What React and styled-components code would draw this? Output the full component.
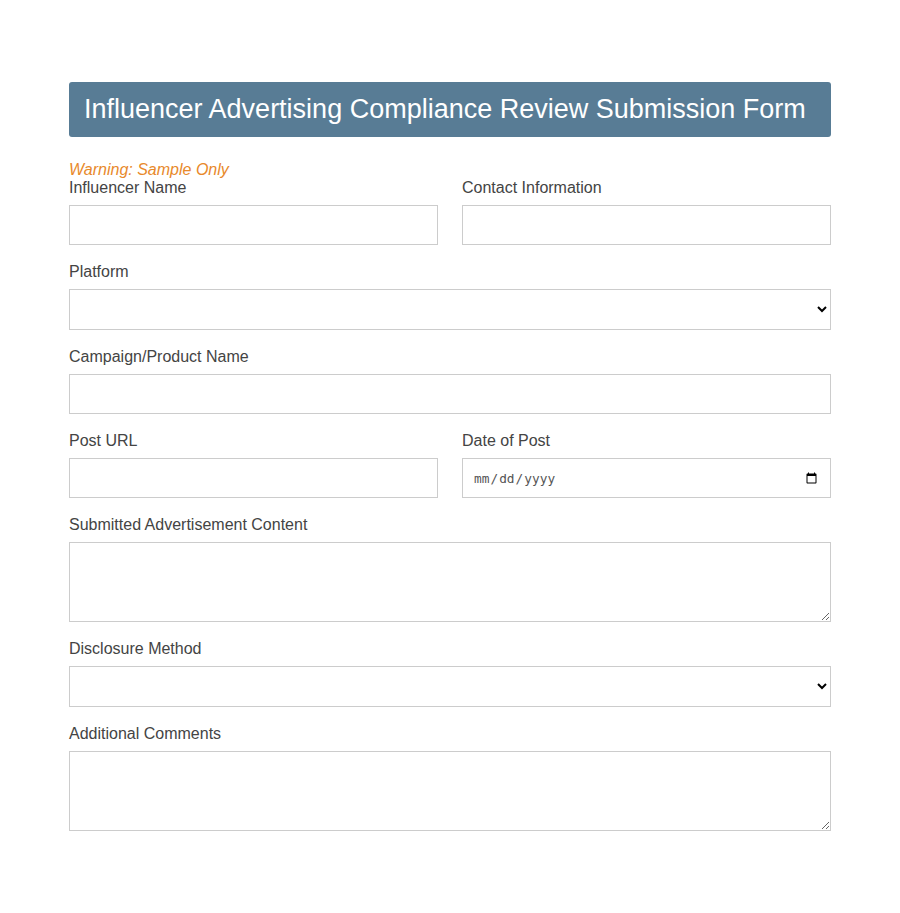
import React from 'react';
import styled, { createGlobalStyle } from 'styled-components';

const GlobalStyle = createGlobalStyle`
    html, body {
        margin: 0;
        padding: 0;
        background: #ffffff;
        font-family: "Liberation Sans", Arial, sans-serif;
    }
    * {
        box-sizing: border-box;
    }
`;

const App = () => {
    return (
        <>
            <GlobalStyle />
            <Page>
                <Header>Influencer Advertising Compliance Review Submission Form</Header>
                <Warning>Warning: Sample Only</Warning>

                <Row>
                    <Field>
                        <Label>Influencer Name</Label>
                        <Input type="text" />
                    </Field>
                    <Field>
                        <Label>Contact Information</Label>
                        <Input type="text" />
                    </Field>
                </Row>

                <Field>
                    <Label>Platform</Label>
                    <Select defaultValue="">
                        <option value=""></option>
                        <option>Instagram</option>
                        <option>TikTok</option>
                        <option>YouTube</option>
                    </Select>
                </Field>

                <Field>
                    <Label>Campaign/Product Name</Label>
                    <Input type="text" />
                </Field>

                <Row>
                    <Field>
                        <Label>Post URL</Label>
                        <Input type="text" />
                    </Field>
                    <Field>
                        <Label>Date of Post</Label>
                        <DateInput type="date" />
                    </Field>
                </Row>

                <Field>
                    <Label>Submitted Advertisement Content</Label>
                    <TextArea />
                </Field>

                <Field>
                    <Label>Disclosure Method</Label>
                    <Select defaultValue="">
                        <option value=""></option>
                        <option>#ad</option>
                        <option>Paid partnership tag</option>
                    </Select>
                </Field>

                <Field last>
                    <Label>Additional Comments</Label>
                    <TextArea />
                </Field>
            </Page>
        </>
    );
};

const Page = styled.div`
    width: 762px;
    margin: 82px auto 0;
    padding-bottom: 40px;
`;

const Header = styled.h1`
    margin: 0 0 24px;
    height: 55px;
    padding: 0 15px;
    display: flex;
    align-items: center;
    background-color: #587c95;
    color: #ffffff;
    border-radius: 3px;
    font-size: 27px;
    font-weight: normal;
    white-space: nowrap;
`;

const Warning = styled.div`
    color: #e8892b;
    font-style: italic;
    font-size: 16px;
    line-height: 17px;
`;

const Row = styled.div`
    display: grid;
    grid-template-columns: 1fr 1fr;
    gap: 24px;
`;

const Field = styled.div`
    display: flex;
    flex-direction: column;
    margin-bottom: ${props => (props.last ? '0' : '17px')};
`;

const Label = styled.label`
    font-size: 16px;
    line-height: 18px;
    padding-top: 1px;
    color: #444444;
    margin-bottom: 8px;
`;

const Input = styled.input`
    height: 40px;
    width: 100%;
    padding: 10px;
    border: 1px solid #cccccc;
    border-radius: 0;
    font-size: 16px;
    font-family: "Liberation Sans", Arial, sans-serif;
    background: #ffffff;
`;

const DateInput = styled(Input)`
    font-family: "DejaVu Sans Mono", monospace;
    font-size: 12.8px;
    color: #555555;
`;

const Select = styled.select`
    height: 41px;
    width: 100%;
    padding: 8px 6px;
    border: 1px solid #cccccc;
    border-radius: 0;
    font-size: 16px;
    font-family: "Liberation Sans", Arial, sans-serif;
    background: #ffffff;
`;

const TextArea = styled.textarea`
    height: 80px;
    width: 100%;
    padding: 10px;
    border: 1px solid #cccccc;
    border-radius: 0;
    font-size: 16px;
    font-family: "Liberation Sans", Arial, sans-serif;
    resize: vertical;
`;

export default App;
